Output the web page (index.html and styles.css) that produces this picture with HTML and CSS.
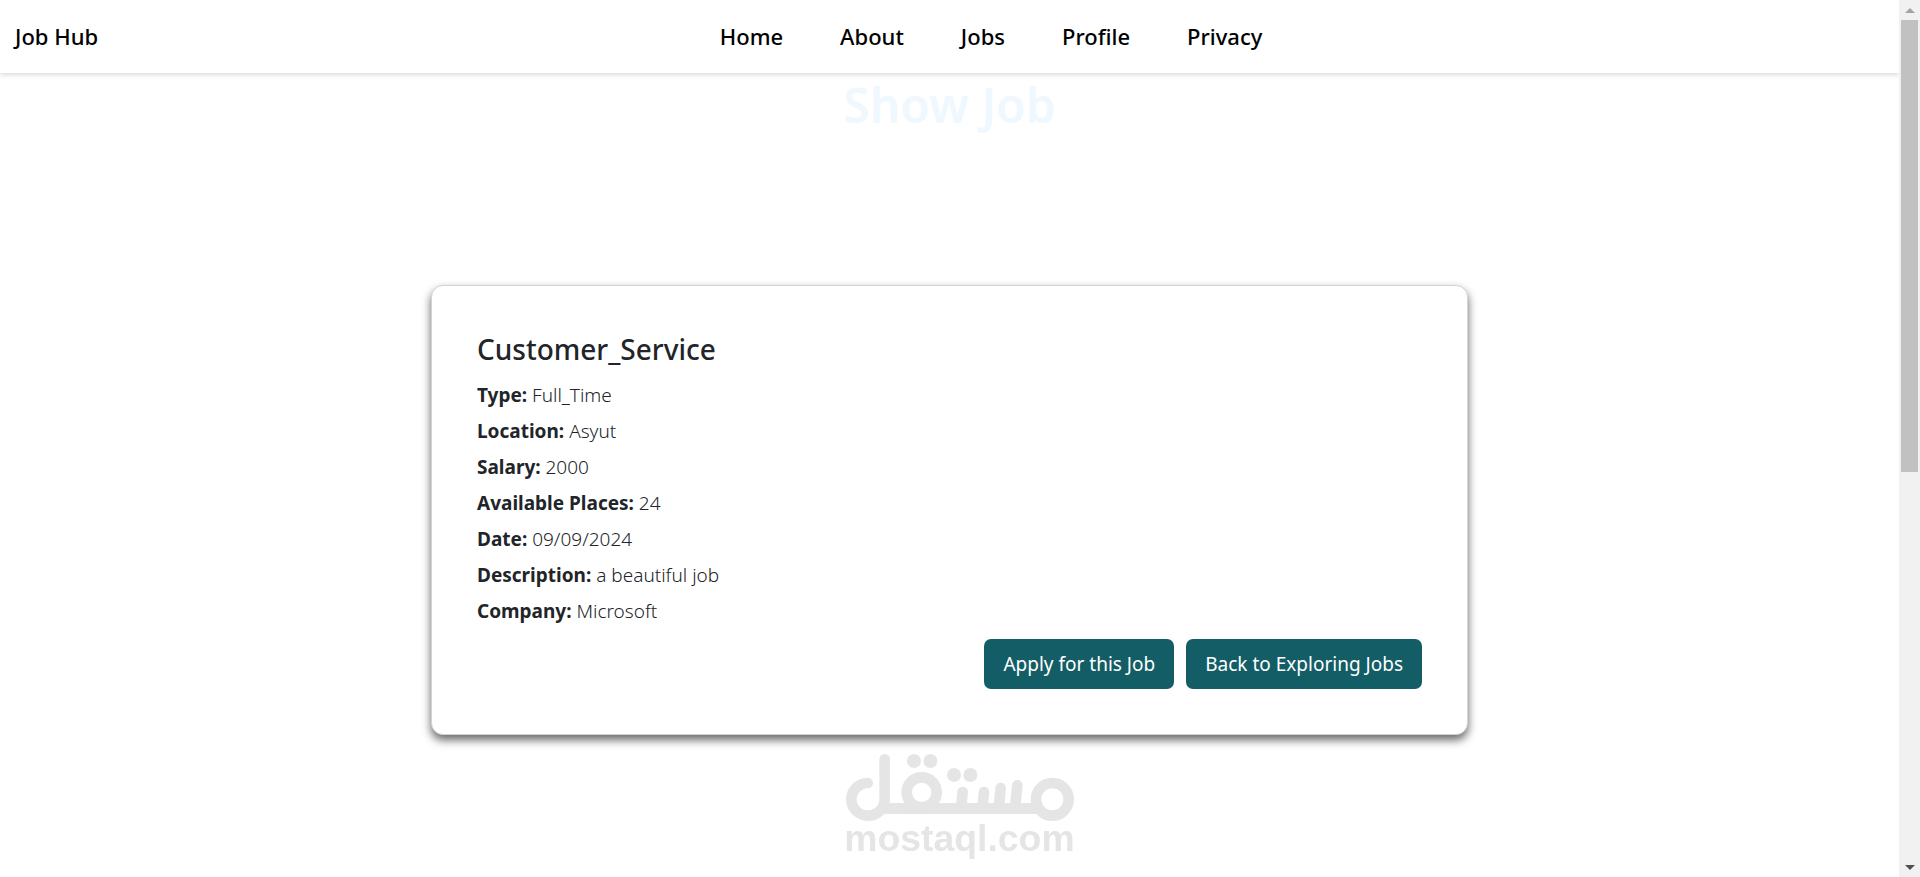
FILE: index.html
```
<!DOCTYPE html>
<html lang="en">
<head>
  <meta charset="UTF-8" />
  <meta name="viewport" content="width=device-width, initial-scale=1.0" />
  <title>Show Job - Job Hub</title>
  <link rel="stylesheet" href="styles.css">
</head>
<body>
  <div class="page">
    <header class="navbar">
      <a class="brand" href="#">Job Hub</a>
      <nav class="nav-links">
        <a href="#">Home</a>
        <a href="#">About</a>
        <a href="#">Jobs</a>
        <a href="#">Profile</a>
        <a href="#">Privacy</a>
      </nav>
    </header>

    <main>
      <h1>Show Job</h1>

      <div class="card">
        <h2>Customer_Service</h2>
        <div class="details">
          <p><strong>Type:</strong> Full_Time</p>
          <p><strong>Location:</strong> Asyut</p>
          <p><strong>Salary:</strong> 2000</p>
          <p><strong>Available Places:</strong> 24</p>
          <p><strong>Date:</strong> 09/09/2024</p>
          <p><strong>Description:</strong> a beautiful job</p>
          <p><strong>Company:</strong> Microsoft</p>
        </div>
        <div class="actions">
          <button class="btn" type="button">Apply for this Job</button>
          <a class="btn" href="#">Back to Exploring Jobs</a>
        </div>
      </div>
    </main>
  </div>

  <div class="scrollbar">
    <button type="button" aria-label="Scroll up"><svg width="10" height="5" viewBox="0 0 10 5"><path d="M0 5L5 0L10 5Z" fill="#a3a3a3"/></svg></button>
    <div class="track"><div class="thumb"></div></div>
    <button type="button" aria-label="Scroll down"><svg width="10" height="5" viewBox="0 0 10 5"><path d="M0 0H10L5 5Z" fill="#505050"/></svg></button>
  </div>

  <!-- watermark -->
  <svg class="watermark" viewBox="66 54 708 342" role="img" aria-label="mostaql.com">
    <g fill="none" stroke="#e5e5e5" stroke-width="32" stroke-linecap="round">
      <path d="M194 73V193A50 49 0 1 1 143 144"/>
      <path d="M194 221H655"/>
      <circle cx="305" cy="172" r="45"/>
      <circle cx="697" cy="193" r="49"/>
      <path d="M428 171L423 221M492 171L487 221M542 159L536 221M592 151L585 221"/>
    </g>
    <g fill="#e5e5e5">
      <path d="M180 205H260V237H170ZM350 205H640V237H350Z"/>
      <circle cx="282" cy="78" r="21"/>
      <circle cx="331" cy="78" r="21"/>
      <circle cx="402" cy="120" r="21"/>
      <circle cx="451" cy="120" r="21"/>
      <text x="73" y="348">mostaql.com</text>
    </g>
  </svg>
</body>
</html>
```

FILE: styles.css
```
* {
  box-sizing: border-box;
}
body {
  margin: 0;
  display: flex;
  height: 100vh;
  overflow: hidden;
  font-family: "Segoe UI", "Noto Sans", sans-serif;
  font-size: 19px;
  color: #212529;
  background: #fff;
}
h1, h2, p {
  margin: 0;
}
a {
  text-decoration: none;
}
.page {
  flex: 1;
  min-width: 0;
  overflow: hidden;
}
.navbar {
  display: flex;
  align-items: center;
  padding: 20px 15px 21px;
  font-size: 22px;
  font-weight: 500;
  line-height: 32px;
  box-shadow: 0 2px 5px rgba(0, 0, 0, 0.15);
}
.navbar a {
  color: #000;
}
.nav-links {
  flex: 1;
  display: flex;
  justify-content: center;
  gap: 57px;
}
h1 {
  text-align: center;
  font-size: 48px;
  font-weight: 600;
  line-height: 64px;
  color: #f0f8ff;
}
.card {
  width: 1037px;
  max-width: 90%;
  margin: 148px auto 0;
  padding: 45px;
  border: 1px solid #d3d3d3;
  border-radius: 12px;
  background: #fff;
  box-shadow: 0 5px 10px rgba(0, 0, 0, 0.6);
}
.card h2 {
  margin-bottom: 14px;
  font-size: 28px;
  font-weight: 500;
  line-height: 36px;
}
.details p {
  font-weight: 300;
  line-height: 28px;
  margin-bottom: 8px;
}
.details strong {
  font-weight: 700;
}
.actions {
  display: flex;
  justify-content: flex-end;
  gap: 12px;
  margin-top: 14px;
}
.btn {
  padding: 11px 19px;
  border: 0;
  border-radius: 7px;
  background: #135d66;
  color: #fff;
  font-family: inherit;
  font-size: 19px;
  font-weight: 400;
  line-height: 28px;
  cursor: pointer;
}
.btn:hover {
  background: #0f4a52;
}
.scrollbar {
  display: flex;
  flex-direction: column;
  width: 21px;
  background: #f1f1f1;
}
.scrollbar button {
  display: flex;
  align-items: center;
  justify-content: center;
  height: 20px;
  padding: 0;
  border: 0;
  background: none;
}
.track {
  flex: 1;
  padding: 0 2px;
}
.thumb {
  height: 54%;
  background: #c1c1c1;
}
.watermark {
  position: fixed;
  left: 50%;
  bottom: 10px;
  width: 236px;
  height: 114px;
  margin-left: -118px;
  pointer-events: none;
}
.watermark text {
  font-family: "Liberation Sans", Arial, sans-serif;
  font-size: 112px;
  font-weight: 700;
}
```
